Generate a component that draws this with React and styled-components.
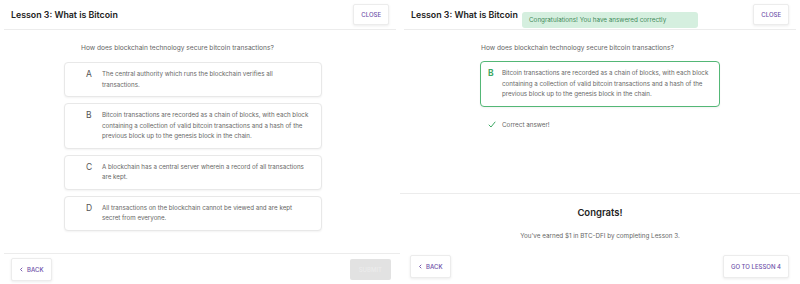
import React from 'react';
import styled, { createGlobalStyle } from 'styled-components';

const Global = createGlobalStyle`
    html, body { margin: 0; padding: 0; background: #fff; }
    body { font-family: Inter, "Noto Sans", "Liberation Sans", sans-serif; color: #555; }
`

const Screen = styled.div`
    display: flex;
    width: 800px;
    height: 284px;
    overflow: hidden;
`

const Panel = styled.div`
    position: relative;
    width: 400px;
    height: 284px;
    display: flex;
    flex-direction: column;
`

const Header = styled.div`
    height: 30px;
    box-sizing: border-box;
    margin: 0 4px;
    padding: 0 7px;
    display: flex;
    align-items: center;
    justify-content: space-between;
    border-bottom: 1px solid #ececec;

    h1 {
        margin: 0;
        font-size: 8.8px;
        font-weight: 600;
        color: #222;
    }
`

const Button = styled.button`
    font-family: inherit;
    font-size: 6px;
    font-weight: 500;
    text-transform: uppercase;
    color: ${p => (p.disabled ? '#ececec' : '#6d4fa8')};
    background: ${p => (p.disabled ? '#e2e2e2' : '#fff')};
    border: ${p => (p.disabled ? 'none' : '1px solid #ececec')};
    box-shadow: ${p => (p.disabled ? 'none' : '0 1px 3px rgba(0,0,0,0.08)')};
    border-radius: 2px;
    height: ${p => p.h || 22}px;
    padding: 0 ${p => p.px || 8}px;
    display: flex;
    align-items: center;
    gap: 3px;
    cursor: pointer;
`

const Body = styled.div`
    display: flex;
    flex-direction: column;
    padding: ${p => p.pad};
`

const Question = styled.p`
    margin: 0 0 ${p => p.gap || 9}px ${p => p.indent || 0}px;
    font-size: 6.6px;
    color: #666;
`

const Options = styled.div`
    display: flex;
    flex-direction: column;
    gap: 6px;
`

const Option = styled.div`
    box-sizing: border-box;
    display: flex;
    gap: ${p => (p.correct ? 7 : 9)}px;
    min-height: 34px;
    padding: ${p => (p.correct ? '6px 5px 6px 7px' : '6px 10px 6px 21px')};
    border: ${p => (p.correct ? '1.5px solid #53b776' : '1px solid #e8e8e8')};
    border-radius: 4px;
    box-shadow: 0 1px 2px rgba(0,0,0,0.05);
    background: #fff;
`

const Letter = styled.span`
    width: 7px;
    flex: none;
    font-size: 8.5px;
    font-weight: ${p => (p.correct ? 700 : 400)};
    color: ${p => (p.correct ? '#3ea864' : '#555')};
    line-height: 11px;
`

const OptionText = styled.span`
    font-size: 6.2px;
    line-height: 10.5px;
    color: #666;
`

const Feedback = styled.div`
    margin: 14px 0 0 8px;
    display: flex;
    align-items: center;
    gap: 6px;
    font-size: 6.3px;
    color: #666;
`

const Toast = styled.div`
    position: absolute;
    top: 12px;
    left: 122px;
    width: 176px;
    height: 16px;
    box-sizing: border-box;
    padding-left: 7px;
    display: flex;
    align-items: center;
    background: #d5efdf;
    border-radius: 3px;
    color: #3f8a5a;
    font-size: 6.3px;
`

const Congrats = styled.div`
    margin-top: auto;
    border-top: 1px solid #ececec;
    height: 56px;
    display: flex;
    flex-direction: column;
    align-items: center;
    padding-top: 13px;
    box-sizing: border-box;

    h2 {
        margin: 0;
        font-size: 9.5px;
        font-weight: 600;
        color: #222;
    }
    p {
        margin: 14px 0 0;
        font-size: 6.3px;
        color: #666;
    }
`

const Footer = styled.div`
    margin: ${p => p.m};
    padding: ${p => p.pad};
    display: flex;
    justify-content: space-between;
    align-items: center;
    border-top: ${p => (p.line ? '1px solid #ececec' : 'none')};
`

const Chevron = () => (
    <svg width="5" height="5" viewBox="0 0 10 10">
        <path d="M6.5 1.5 L3 5 L6.5 8.5" fill="none" stroke="#6d4fa8" strokeWidth="1.8" />
    </svg>
)

const Check = () => (
    <svg width="8" height="7" viewBox="0 0 16 14">
        <path d="M1.5 7.5 L6 12 L14.5 1.5" fill="none" stroke="#3ea864" strokeWidth="2" />
    </svg>
)

const options = [
    ['A', 'The central authority which runs the blockchain verifies all transactions.'],
    ['B', 'Bitcoin transactions are recorded as a chain of blocks, with each block containing a collection of valid bitcoin transactions and a hash of the previous block up to the genesis block in the chain.'],
    ['C', 'A blockchain has a central server wherein a record of all transactions are kept.'],
    ['D', 'All transactions on the blockchain cannot be viewed and are kept secret from everyone.'],
]

const questionText = 'How does blockchain technology secure bitcoin transactions?'

export default function App() {
    return (
        <Screen>
            <Global />
            <Panel>
                <Header>
                    <h1>Lesson 3: What is Bitcoin</h1>
                    <Button h={21} px={7}>Close</Button>
                </Header>
                <Body pad="14px 78px 0 64px">
                    <Question indent={17} gap={10}>{questionText}</Question>
                    <Options>
                        {options.map(([l, t]) => (
                            <Option key={l}>
                                <Letter>{l}</Letter>
                                <OptionText>{t}</OptionText>
                            </Option>
                        ))}
                    </Options>
                </Body>
                <Footer line m="auto 0 3px 4px" pad="4px 9px 0 7px">
                    <Button h={23} px={7}><Chevron />Back</Button>
                    <Button disabled h={21} px={9}>Submit</Button>
                </Footer>
            </Panel>
            <Panel>
                <Header>
                    <h1>Lesson 3: What is Bitcoin</h1>
                    <Button h={21} px={7}>Close</Button>
                </Header>
                <Toast>Congratulations! You have answered correctly</Toast>
                <Body pad="14px 80px 0 80px">
                    <Question indent={1}>{questionText}</Question>
                    <Option correct>
                        <Letter correct>B</Letter>
                        <OptionText>{options[1][1]}</OptionText>
                    </Option>
                    <Feedback><Check />Correct answer!</Feedback>
                </Body>
                <Congrats>
                    <h2>Congrats!</h2>
                    <p>You've earned $1 in BTC-DFI by completing Lesson 3.</p>
                </Congrats>
                <Footer m="6px 0 6px 0" pad="0 11px 0 10px">
                    <Button h={23} px={7}><Chevron />Back</Button>
                    <Button h={23} px={7}>Go to Lesson 4</Button>
                </Footer>
            </Panel>
        </Screen>
    );
}
